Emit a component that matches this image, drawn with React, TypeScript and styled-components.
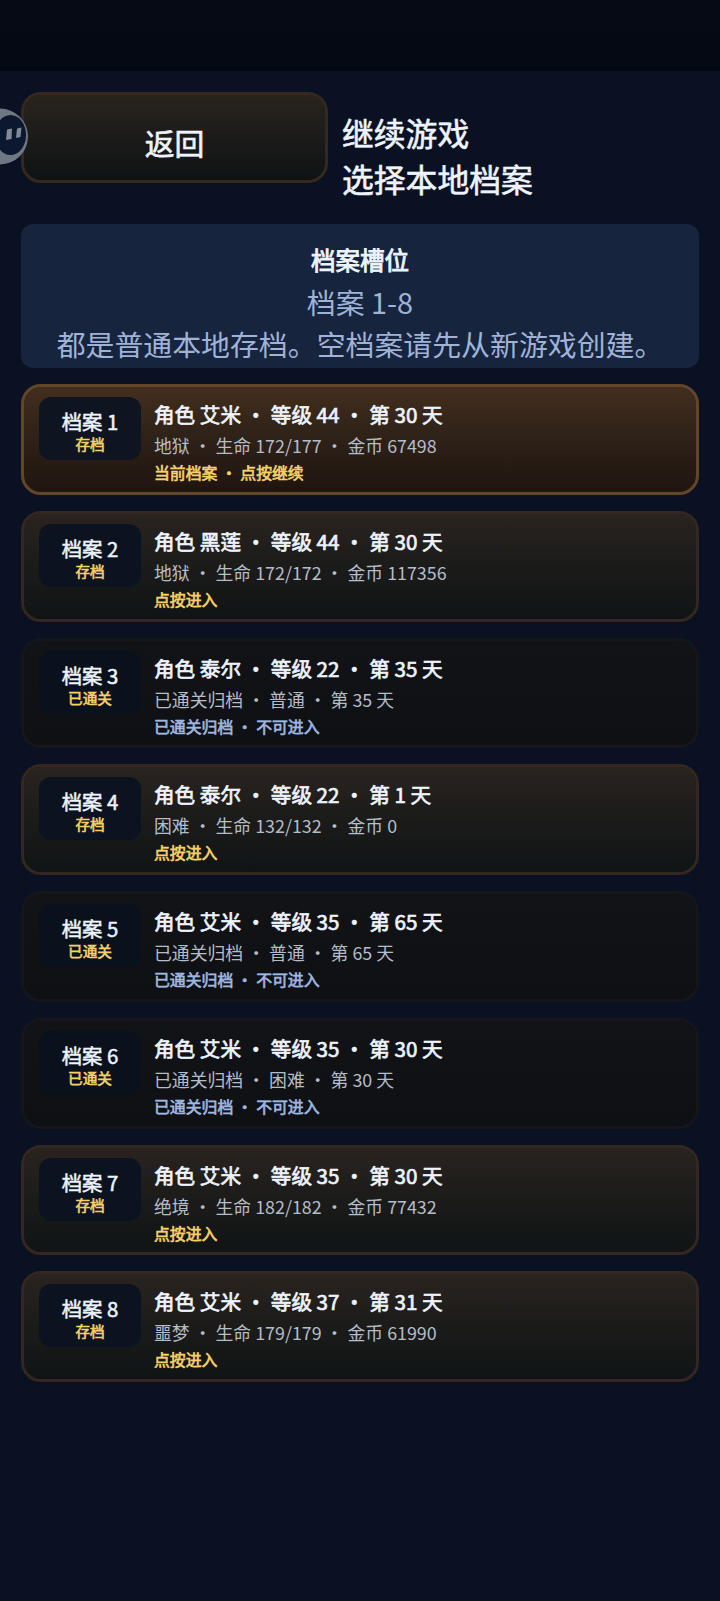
import React from "react";
import styled, { createGlobalStyle } from "styled-components";

const GlobalStyle = createGlobalStyle`
  * { box-sizing: border-box; }
  body {
    margin: 0;
    background: #0a1122;
    color: #edf4ff;
    font-family: "Noto Sans CJK SC", sans-serif;
  }
`;

type Variant = "current" | "open" | "archived";

const Screen = styled.div`
  position: relative;
  min-height: 1601px;
  overflow: hidden;
  background: #0a1122;
`;

const StatusBar = styled.div`
  height: 71px;
  background: linear-gradient(#050a14, #040a14);
`;

const Content = styled.main`
  display: flex;
  flex-direction: column;
  padding: 21px 21px 0;
`;

const Header = styled.header`
  display: flex;
  gap: 14px;
  height: 132px;
`;

const BackButton = styled.button`
  width: 307px;
  height: 91px;
  padding: 8px 0 0;
  border: 3px solid #35281f;
  border-radius: 20px;
  background: linear-gradient(#2a231c, #1b1b19 50%, #0f1314) padding-box;
  color: #edf4ff;
  font: 400 29.8px/40px "Noto Sans CJK SC", sans-serif;
  -webkit-text-stroke: 0.6px currentColor;
`;

const Heading = styled.h1`
  margin: 0;
  padding-top: 17px;
  font-size: 31.8px;
  font-weight: 400;
  line-height: 46.4px;
  -webkit-text-stroke: 0.6px currentColor;
`;

const Notice = styled.section`
  height: 144px;
  padding-top: 18px;
  border-radius: 12px;
  background: #17243d;
  text-align: center;
`;

const NoticeTitle = styled.h2`
  margin: 0;
  font-size: 24.5px;
  font-weight: 400;
  line-height: 36px;
  -webkit-text-stroke: 0.9px currentColor;
`;

const NoticeText = styled.p`
  margin: 2px 0 0;
  color: #9fb2d8;
  font-size: 28.9px;
  line-height: 42px;
`;

const SlotList = styled.ul`
  display: flex;
  flex-direction: column;
  gap: 16px;
  margin: 16px 0 0;
  padding: 0;
  list-style: none;
`;

const fills: Record<Variant, string> = {
  current: "linear-gradient(#432e1d, #2d2118 50%, #1f150f)",
  open: "linear-gradient(#2a231f, #1c1c1a 45%, #101415)",
  archived: "linear-gradient(#121317, #0f1014)",
};
const edges: Record<Variant, string> = {
  current: "#624627",
  open: "#33271f",
  archived: "#15151a",
};
const badges: Record<Variant, string> = {
  current: "#0e1521",
  open: "#0b1320",
  archived: "#09111d",
};

const Slot = styled.li<{ $variant: Variant }>`
  display: flex;
  gap: 13px;
  height: 110.75px;
  padding: 10px 15px;
  border: 3px solid ${(p) => edges[p.$variant]};
  border-radius: 20px;
  background: ${(p) => fills[p.$variant]} padding-box;
`;

const Badge = styled.div<{ $variant: Variant }>`
  width: 102px;
  height: 63px;
  padding-top: 11px;
  border-radius: 12px;
  background: ${(p) => badges[p.$variant]};
  text-align: center;
`;

const BadgeName = styled.div`
  font-size: 20.4px;
  font-weight: 400;
  line-height: 27px;
  -webkit-text-stroke: 0.5px currentColor;
`;

const BadgeState = styled.div`
  color: #f7d268;
  font-size: 14.6px;
  font-weight: 400;
  line-height: 18px;
  -webkit-text-stroke: 0.6px currentColor;
`;

const Details = styled.div`
  padding-top: 3px;
  white-space: nowrap;
`;

const Name = styled.div`
  font-size: 20.6px;
  font-weight: 400;
  line-height: 29px;
  -webkit-text-stroke: 0.7px currentColor;
`;

const Stats = styled.div`
  margin: 2px 0 1px;
  color: #b5bdc9;
  font-size: 17.85px;
  line-height: 28px;
`;

const Action = styled.div<{ $variant: Variant }>`
  color: ${(p) => (p.$variant === "archived" ? "#9fb8e0" : "#f7d268")};
  font-size: 15.85px;
  font-weight: 400;
  line-height: 26px;
  -webkit-text-stroke: 0.65px currentColor;
`;

const Assistant = styled.svg`
  position: absolute;
  left: 0;
  top: 107px;
`;

const slots: { variant: Variant; name: string; stats: string; action: string }[] = [
  { variant: "current", name: "角色 艾米 ・ 等级 44 ・ 第 30 天", stats: "地狱 ・ 生命 172/177 ・ 金币 67498", action: "当前档案 ・ 点按继续" },
  { variant: "open", name: "角色 黑莲 ・ 等级 44 ・ 第 30 天", stats: "地狱 ・ 生命 172/172 ・ 金币 117356", action: "点按进入" },
  { variant: "archived", name: "角色 泰尔 ・ 等级 22 ・ 第 35 天", stats: "已通关归档 ・ 普通 ・ 第 35 天", action: "已通关归档 ・ 不可进入" },
  { variant: "open", name: "角色 泰尔 ・ 等级 22 ・ 第 1 天", stats: "困难 ・ 生命 132/132 ・ 金币 0", action: "点按进入" },
  { variant: "archived", name: "角色 艾米 ・ 等级 35 ・ 第 65 天", stats: "已通关归档 ・ 普通 ・ 第 65 天", action: "已通关归档 ・ 不可进入" },
  { variant: "archived", name: "角色 艾米 ・ 等级 35 ・ 第 30 天", stats: "已通关归档 ・ 困难 ・ 第 30 天", action: "已通关归档 ・ 不可进入" },
  { variant: "open", name: "角色 艾米 ・ 等级 35 ・ 第 30 天", stats: "绝境 ・ 生命 182/182 ・ 金币 77432", action: "点按进入" },
  { variant: "open", name: "角色 艾米 ・ 等级 37 ・ 第 31 天", stats: "噩梦 ・ 生命 179/179 ・ 金币 61990", action: "点按进入" },
];

export default function App() {
  return (
    <Screen lang="zh-CN">
      <GlobalStyle />
      <StatusBar />
      <Content>
        <Header>
          <BackButton>返回</BackButton>
          <Heading>
            继续游戏
            <br />
            选择本地档案
          </Heading>
        </Header>
        <Notice>
          <NoticeTitle>档案槽位</NoticeTitle>
          <NoticeText>
            档案 1-8
            <br />
            都是普通本地存档。空档案请先从新游戏创建。
          </NoticeText>
        </Notice>
        <SlotList>
          {slots.map((slot, i) => (
            <Slot key={i} $variant={slot.variant}>
              <Badge $variant={slot.variant}>
                <BadgeName>档案 {i + 1}</BadgeName>
                <BadgeState>{slot.variant === "archived" ? "已通关" : "存档"}</BadgeState>
              </Badge>
              <Details>
                <Name>{slot.name}</Name>
                <Stats>{slot.stats}</Stats>
                <Action $variant={slot.variant}>{slot.action}</Action>
              </Details>
            </Slot>
          ))}
        </SlotList>
      </Content>
      <Assistant width="29" height="58" viewBox="0 0 29 58" aria-hidden="true">
        <circle cx="0" cy="29.5" r="28" fill="#6f7684" />
        <ellipse cx="10.5" cy="28" rx="15.5" ry="20" fill="#0c1730" />
        <path d="M7 22.5L12 21.5L11.5 32L6 33Z" fill="#828a98" />
        <path d="M17 21.5L21.5 20.5L20.5 30L16 31Z" fill="#828a98" />
      </Assistant>
    </Screen>
  );
}
